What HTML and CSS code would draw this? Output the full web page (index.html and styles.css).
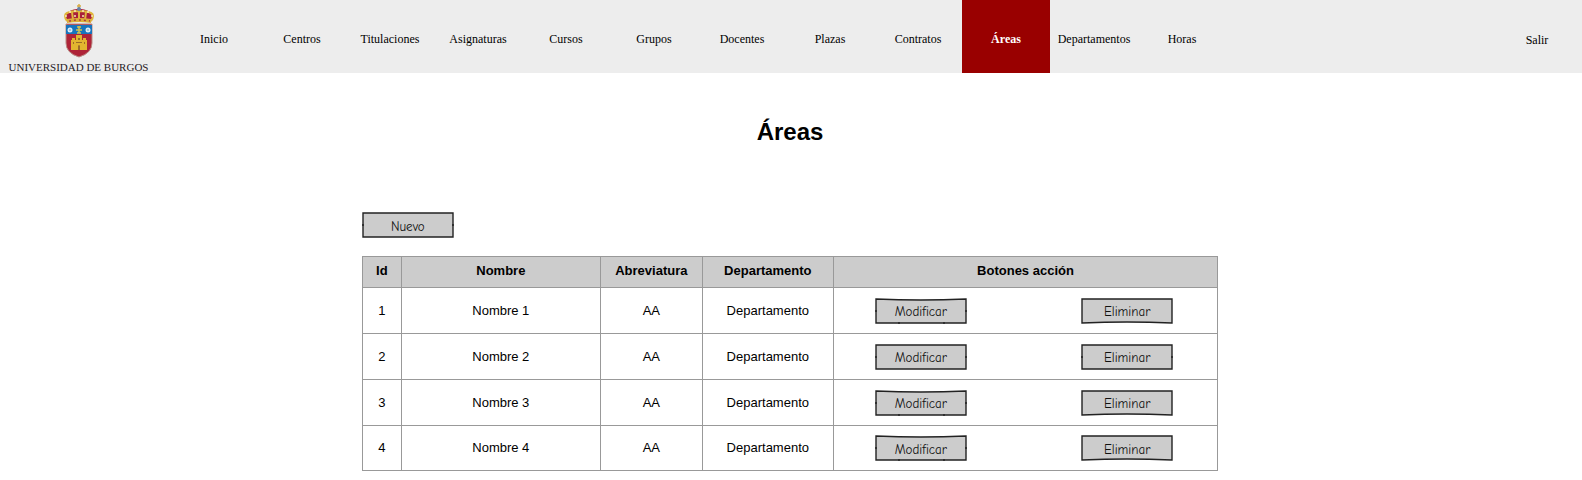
FILE: index.html
```html
<!DOCTYPE html>
<html lang="es">
<head>
<meta charset="utf-8">
<meta name="viewport" content="width=device-width, initial-scale=1">
<title>Áreas - Universidad de Burgos</title>
<link rel="stylesheet" href="styles.css">
</head>
<body>
<svg class="defs" aria-hidden="true">
  <symbol id="frame-flat" viewBox="0 0 92 26" preserveAspectRatio="none">
    <path class="frame-line" d="M1 1H91V25H1ZM0 13H2M90 13H92"/>
  </symbol>
  <symbol id="frame-sag" viewBox="0 0 92 26" preserveAspectRatio="none">
    <path class="frame-line" d="M1 1Q46 3 91 1V25H1ZM0 13H2M90 13H92M24 24V26M69 24V26"/>
  </symbol>
  <symbol id="frame-arch" viewBox="0 0 92 26" preserveAspectRatio="none">
    <path class="frame-line" d="M1 1H91V25Q46 23 1 25Z"/>
  </symbol>
</svg>

<header class="topbar">
  <a class="brand" href="#">
    <svg class="crest" viewBox="12 2 34 57" aria-hidden="true">
      <path fill="#a91f3b" d="M17 22L15 15Q21 8 29 9Q37 8 43 15L41 22Z"/>
      <path fill="none" stroke="#e0b63c" stroke-width="2" d="M17 21Q13 15 17 13T29 11T41 13T41 21M29 9V20M22 12L23 20M36 12L35 20"/>
      <path fill="none" stroke="#d8ad45" stroke-width="1.5" d="M29 4V9M27 6H31"/>
      <circle cx="29" cy="9" r="2" fill="#6680a5"/>
      <g fill="#f6e8b7"><circle cx="16" cy="16" r="1"/><circle cx="20" cy="12" r="1"/><circle cx="25" cy="11" r="1"/><circle cx="33" cy="11" r="1"/><circle cx="38" cy="12" r="1"/><circle cx="42" cy="16" r="1"/><circle cx="25" cy="16" r="1"/><circle cx="33" cy="16" r="1"/></g>
      <path fill="#dcae38" d="M17 19Q29 17 41 19V23Q29 21 17 23Z"/>
      <path stroke="#b23a3c" stroke-width="1.5" stroke-dasharray="2 3" fill="none" d="M19 21Q29 19 40 21"/>
      <path fill="#ae2338" stroke="#b98d86" d="M16 24H42V43Q42 53 29 57Q16 53 16 43Z"/>
      <path fill="#1774bd" d="M16 25H42V34H16Z"/>
      <g fill="#dcecf7"><circle cx="20" cy="30" r="2.5"/><circle cx="38" cy="30" r="2.5"/></g>
      <g fill="#8bb8dc"><circle cx="20" cy="30" r="1"/><circle cx="38" cy="30" r="1"/></g>
      <path stroke="#d6c04e" stroke-width="1.5" fill="none" d="M29 26V33M26 30H32M27 27H31M27 33H31"/>
      <path fill="#e2b52f" d="M21 50V40H22V38H25V40H26V35H32V40H33V38H36V40H37V50Z"/>
      <path fill="#9b6b28" d="M28 50V46Q29 44 30 46V50ZM23 42H24V44H23ZM34 42H35V44H34ZM28 38H30V40H28ZM26 42H32V43H26Z"/>
    </svg>
    <span class="brand-name">UNIVERSIDAD DE BURGOS</span>
  </a>
  <nav class="menu" aria-label="Principal">
    <a class="menu-item" href="#">Inicio</a>
    <a class="menu-item" href="#">Centros</a>
    <a class="menu-item" href="#">Titulaciones</a>
    <a class="menu-item" href="#">Asignaturas</a>
    <a class="menu-item" href="#">Cursos</a>
    <a class="menu-item" href="#">Grupos</a>
    <a class="menu-item" href="#">Docentes</a>
    <a class="menu-item" href="#">Plazas</a>
    <a class="menu-item" href="#">Contratos</a>
    <a class="menu-item menu-item-active" href="#" aria-current="page">Áreas</a>
    <a class="menu-item" href="#">Departamentos</a>
    <a class="menu-item" href="#">Horas</a>
  </nav>
  <a class="menu-item logout" href="#">Salir</a>
</header>

<main class="content">
  <h1 class="title">Áreas</h1>
  <section class="panel">
    <button class="btn" type="button"><svg class="frame" aria-hidden="true"><use href="#frame-flat"/></svg>Nuevo</button>
    <table class="grid">
      <colgroup><col class="col-id"><col class="col-name"><col class="col-abbr"><col class="col-dept"><col></colgroup>
      <thead>
        <tr><th>Id</th><th>Nombre</th><th>Abreviatura</th><th>Departamento</th><th>Botones acción</th></tr>
      </thead>
      <tbody>
        <tr><td>1</td><td>Nombre 1</td><td>AA</td><td>Departamento</td><td><div class="actions">
          <button class="btn" type="button"><svg class="frame" aria-hidden="true"><use href="#frame-sag"/></svg>Modificar</button>
          <button class="btn" type="button"><svg class="frame" aria-hidden="true"><use href="#frame-arch"/></svg>Eliminar</button></div></td></tr>
        <tr><td>2</td><td>Nombre 2</td><td>AA</td><td>Departamento</td><td><div class="actions">
          <button class="btn" type="button"><svg class="frame" aria-hidden="true"><use href="#frame-flat"/></svg>Modificar</button>
          <button class="btn" type="button"><svg class="frame" aria-hidden="true"><use href="#frame-flat"/></svg>Eliminar</button></div></td></tr>
        <tr><td>3</td><td>Nombre 3</td><td>AA</td><td>Departamento</td><td><div class="actions">
          <button class="btn" type="button"><svg class="frame" aria-hidden="true"><use href="#frame-sag"/></svg>Modificar</button>
          <button class="btn" type="button"><svg class="frame" aria-hidden="true"><use href="#frame-arch"/></svg>Eliminar</button></div></td></tr>
        <tr><td>4</td><td>Nombre 4</td><td>AA</td><td>Departamento</td><td><div class="actions">
          <button class="btn" type="button"><svg class="frame" aria-hidden="true"><use href="#frame-sag"/></svg>Modificar</button>
          <button class="btn" type="button"><svg class="frame" aria-hidden="true"><use href="#frame-arch"/></svg>Eliminar</button></div></td></tr>
      </tbody>
    </table>
  </section>
</main>
</body>
</html>
```
FILE: styles.css
```css
* {
  box-sizing: border-box;
}

body {
  margin: 0;
  background: #fff;
  color: #000;
  font-family: "Liberation Sans", Arial, sans-serif;
  font-size: 13px;
  line-height: 16px;
}

.defs {
  display: none;
}

.topbar {
  display: flex;
  min-height: 73px;
  background: #ededed;
  font-family: "Liberation Serif", "Times New Roman", serif;
}

.brand {
  display: flex;
  flex: none;
  flex-direction: column;
  align-items: center;
  width: 170px;
  padding: 2px 21px 0 8px;
  color: #27211f;
  text-decoration: none;
  white-space: nowrap;
}

.crest {
  display: block;
  width: 34px;
  height: 57px;
}

.brand-name {
  padding-top: 2px;
  font-size: 11px;
  line-height: 12px;
}

.menu {
  display: flex;
}

.menu-item {
  display: flex;
  align-items: center;
  justify-content: center;
  width: 88px;
  padding-top: 4px;
  color: #000;
  font-size: 12px;
  text-decoration: none;
}

.menu-item-active {
  background: #900;
  color: #fff;
  font-weight: bold;
}

.logout {
  margin-left: auto;
  padding: 6px 2px 0 0;
}

.content {
  display: flex;
  flex-direction: column;
  align-items: center;
  padding: 43px 2px 0 0;
}

.title {
  margin: 0;
  font-size: 24px;
  line-height: 32px;
}

.panel {
  width: 54.2%;
  margin-top: 64px;
}

.btn {
  position: relative;
  display: block;
  width: 92px;
  height: 26px;
  padding: 3px 0 0;
  border: 0;
  background: none;
  color: #111;
  font-family: "Comic Sans MS", "Comic Neue", Lato, sans-serif;
  font-size: 13px;
  line-height: 16px;
  isolation: isolate;
}

.frame {
  position: absolute;
  inset: 0;
  z-index: -1;
  width: 100%;
  height: 100%;
}

.frame-line {
  fill: #ccc;
  stroke: #222;
  stroke-width: 1.4px;
}

.grid {
  width: 100%;
  margin-top: 18px;
  border-collapse: collapse;
  table-layout: fixed;
  text-align: center;
}

.grid th,
.grid td {
  padding: 0;
  border: 1px solid #999;
}

.grid th {
  height: 31px;
  padding-bottom: 2px;
  background: #ccc;
}

.grid td {
  height: 46px;
}

.grid tbody tr:last-child td {
  height: 45px;
}

.col-id {
  width: 39px;
}

.col-name {
  width: 199px;
}

.col-abbr {
  width: 102px;
}

.col-dept {
  width: 131px;
}

.actions {
  display: flex;
  justify-content: space-between;
  padding: 0 44px 0 41px;
}
```
